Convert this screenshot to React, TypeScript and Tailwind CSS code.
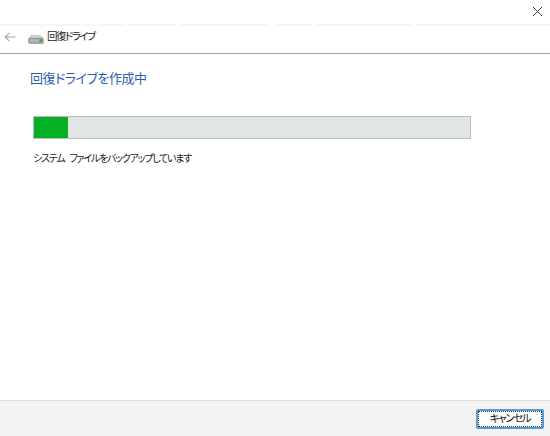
const cjk = "font-['Noto_Sans_CJK_JP','Noto_Sans_CJK_SC',sans-serif] [font-feature-settings:'palt']";

const topLines = [
  "w-[81px]",
  "w-[40px] ml-[3px]",
  "w-[49px] ml-[3px]",
  "w-[89px] ml-[5px]",
  "w-[38px] ml-[4px]",
  "w-[94px] ml-[5px]",
  "flex-1 ml-[5px]",
];

const DriveIcon = () => (
  <svg width="16" height="9" viewBox="0 0 16 9">
    <path d="M3 .5h9.5L15 4H1z" fill="#d4d7d7" stroke="#a9adad" strokeWidth="0.6" />
    <rect x="0.5" y="3" width="15" height="5.5" rx="1.2" fill="#9ba1a0" stroke="#858b8b" strokeWidth="0.5" />
    <rect x="2" y="4.3" width="9" height="2.4" fill="#b8bdbc" />
    <rect x="11.5" y="4.4" width="2.4" height="2.4" fill="#43a832" />
  </svg>
);

const App = () => {
  return (
    <div className={`flex flex-col w-[550px] h-[436px] bg-white overflow-hidden ${cjk}`}>
      {/* title bar */}
      <div className="flex justify-end h-[24px] bg-white">
        <svg className="mt-[6px] mr-[7px]" width="11" height="11" viewBox="0 0 11 11">
          <path d="M1 1l9 9M10 1l-9 9" stroke="#404040" strokeWidth="1" fill="none" />
        </svg>
      </div>

      {/* faint tab strip */}
      <div className="flex h-[2px] bg-white">
        {topLines.map((w, i) => (
          <div key={i} className={`${w} h-[2px] bg-[#f5f5f5]`} />
        ))}
      </div>

      {/* nav row */}
      <div className="flex items-center h-[27px] border-b border-[#a0a0a0] box-content">
        <svg className="ml-[4px] mb-[5px]" width="12" height="10" viewBox="0 0 12 10">
          <path d="M11.5 5H1.2M5.5 .8L1.2 5l4.3 4.2" stroke="#a6a6a6" strokeWidth="1.1" fill="none" />
        </svg>
        <div className="ml-[12px] flex">
          <DriveIcon />
        </div>
        <span className="ml-[3px] mb-[6px] text-[10.5px] leading-none tracking-[-1.55px] text-[#1a1a1a]">回復ドライブ</span>
      </div>

      {/* content */}
      <div className="flex flex-col flex-1 pl-[30px] pt-[15px]">
        <h1 className="text-[13px] leading-[18px] font-normal tracking-[-0.5px] text-[#2a5fb0]">回復ドライブを作成中</h1>
        <div className="flex ml-[3px] mt-[29px] w-[438px] h-[23px] bg-[#e2e5e5] border border-[#bcbcbc]">
          <div className="w-[34px] bg-[#06b025]" />
        </div>
        <p className="ml-[3px] mt-[12px] text-[10px] leading-[14px] tracking-[-1.25px] [word-spacing:4px] text-[#1a1a1a]">システム ファイルをバックアップしています</p>
      </div>

      {/* footer */}
      <div className="flex justify-end items-center h-[35px] pr-[6px] bg-[#f3f3f3] border-t border-[#dfdfdf] box-content">
        <button className="flex items-center justify-center w-[68px] h-[20px] rounded-[2px] bg-white border-2 border-[#5a9be0] outline-1 outline-dotted -outline-offset-3 outline-[#333] text-[10.5px] leading-none tracking-[-1.4px] text-[#111]">
          キャンセル
        </button>
      </div>
    </div>
  );
};

export default App;
